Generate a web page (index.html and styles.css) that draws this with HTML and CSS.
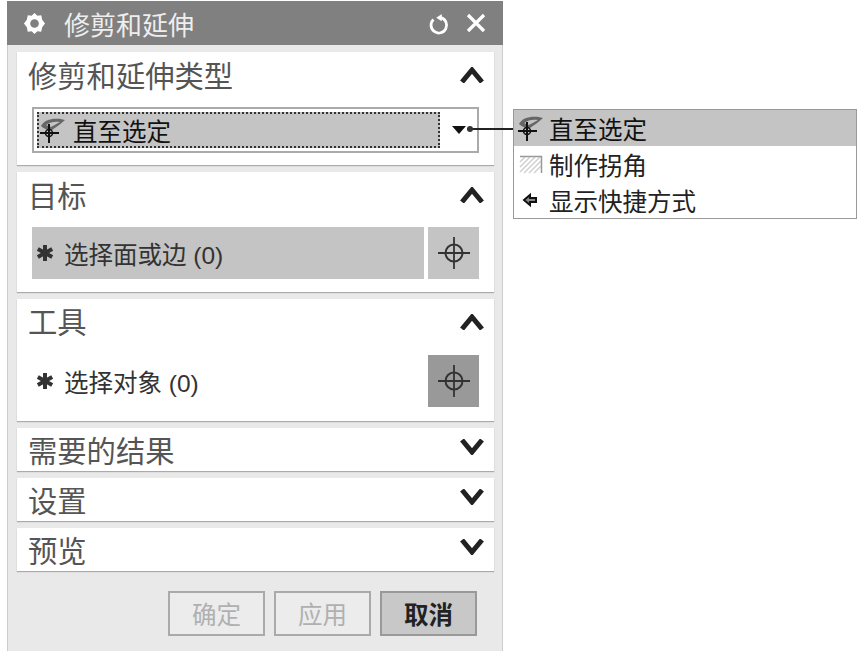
FILE: index.html
```html
<!DOCTYPE html>
<html lang="zh-CN">
<head>
    <meta charset="UTF-8">
    <title>修剪和延伸</title>
    <link rel="stylesheet" href="styles.css">
</head>
<body>
    <svg class="defs" width="0" height="0">
        <symbol id="crosshair" viewBox="0 0 32 32">
            <circle cx="16" cy="16" r="8.5" fill="none" stroke="#333" stroke-width="2"/>
            <path d="M0 16H32M16 0V32" stroke="#333" stroke-width="1.8"/>
        </symbol>
        <symbol id="up" viewBox="0 0 24 16">
            <path d="M2 15L12 3L22 15" fill="none" stroke="#222" stroke-width="5"/>
        </symbol>
        <symbol id="down" viewBox="0 0 24 16">
            <path d="M2 1L12 13L22 1" fill="none" stroke="#222" stroke-width="5"/>
        </symbol>
        <symbol id="until" viewBox="0 0 25 25">
            <path d="M1 8C4 1 16 -1 25 2C21 6 16 9 12 12C8 12 4 11 1 8Z" fill="#666"/>
            <path d="M6 7C10 4 15 3 20 4C16 6 13 8 11 9Z" fill="#c4c4c4"/>
            <circle cx="9" cy="15" r="3.500" fill="none" stroke="#111" stroke-width="1.500"/>
            <path d="M0 15H19M9 6V25" stroke="#111" stroke-width="2"/>
        </symbol>
        <symbol id="star" viewBox="0 0 20 20">
            <path d="M10 1V19M2 5.500L18 14.500M18 5.500L2 14.500" stroke="#333" stroke-width="4.400"/>
        </symbol>
    </svg>

    <div class="dialog">
        <div class="titlebar">
            <svg class="gear" viewBox="0 0 24 24">
                <path d="M12 1L15 4L19 3.5L20 8L23 12L20 16L19 20.500L15 20L12 23L9 20L5 20.500L4 16L1 12L4 8L5 3.500L9 4Z" fill="#fff"/>
                <circle cx="12" cy="12" r="4.500" fill="#808080"/>
            </svg>
            <span class="title">修剪和延伸</span>
            <svg class="reset" viewBox="0 0 24 24">
                <path d="M6 6A8.500 8.500 0 1 0 14 4" fill="none" stroke="#fff" stroke-width="3"/>
                <path d="M9 4L15 0V8Z" fill="#fff"/>
            </svg>
            <svg class="close" viewBox="0 0 20 20">
                <path d="M2 2L18 18M18 2L2 18" stroke="#fff" stroke-width="3.200"/>
            </svg>
        </div>

        <div class="sections">
            <section class="group type-group">
                <div class="group-head">
                    <h3>修剪和延伸类型</h3>
                    <svg class="chevron"><use href="#up"/></svg>
                </div>
                <div class="combo">
                    <div class="combo-value">
                        <svg class="until-icon"><use href="#until"/></svg>
                        <span>直至选定</span>
                    </div>
                    <span class="combo-arrow"></span>
                </div>
            </section>

            <section class="group target-group">
                <div class="group-head">
                    <h3>目标</h3>
                    <svg class="chevron"><use href="#up"/></svg>
                </div>
                <div class="pick-row">
                    <div class="pick-label active">
                        <svg class="star"><use href="#star"/></svg>
                        <span>选择面或边 (0)</span>
                    </div>
                    <div class="pick-btn"><svg><use href="#crosshair"/></svg></div>
                </div>
            </section>

            <section class="group tool-group">
                <div class="group-head">
                    <h3>工具</h3>
                    <svg class="chevron"><use href="#up"/></svg>
                </div>
                <div class="pick-row">
                    <div class="pick-label">
                        <svg class="star"><use href="#star"/></svg>
                        <span>选择对象 (0)</span>
                    </div>
                    <div class="pick-btn dark"><svg><use href="#crosshair"/></svg></div>
                </div>
            </section>

            <section class="group closed">
                <div class="group-head">
                    <h3>需要的结果</h3>
                    <svg class="chevron"><use href="#down"/></svg>
                </div>
            </section>
            <section class="group closed">
                <div class="group-head">
                    <h3>设置</h3>
                    <svg class="chevron"><use href="#down"/></svg>
                </div>
            </section>
            <section class="group closed">
                <div class="group-head">
                    <h3>预览</h3>
                    <svg class="chevron"><use href="#down"/></svg>
                </div>
            </section>
        </div>

        <div class="buttons">
            <button class="disabled">确定</button>
            <button class="disabled">应用</button>
            <button class="cancel">取消</button>
        </div>
    </div>

    <!-- callout from the combo arrow to the opened list -->
    <div class="leader"></div>

    <div class="menu">
        <div class="menu-item selected">
            <svg class="until-icon"><use href="#until"/></svg>
            <span>直至选定</span>
        </div>
        <div class="menu-item">
            <svg class="menu-icon" viewBox="0 0 25 20">
                <path d="M2 18L17 3M6 19L22 3M11 19L23 7M2 13L12 3M2 8L7 3M16 19L23 12" stroke="#d0d0d0" stroke-width="1.500"/>
                <path d="M2 2.500H23.500V19" fill="none" stroke="#999" stroke-width="1.500"/>
            </svg>
            <span>制作拐角</span>
        </div>
        <div class="menu-item">
            <svg class="menu-icon" viewBox="0 0 25 20">
                <path d="M6 10L12 5V8H18V12H12V15Z" fill="#888" stroke="#111" stroke-width="2"/>
            </svg>
            <span>显示快捷方式</span>
        </div>
    </div>
</body>
</html>
```

FILE: styles.css
```css
html, body {
    margin: 0;
    height: 100%;
    background-color: #fff;
    overflow: hidden;
    font-family: "Liberation Sans", "Noto Sans CJK SC", sans-serif;
    color: #333;
}

body {
    position: relative;
}

.defs {
    position: absolute;
}

.dialog {
    box-sizing: border-box;
    width: 496px;
    height: 650px;
    margin: 1px 0 0 7px;
    background-color: #e9e9e9;
    border-left: 1px solid #ccc;
    border-right: 1px solid #ccc;
    display: flex;
    flex-direction: column;
}

/* Title bar */
.titlebar {
    height: 44px;
    margin: 0 -1px;
    background-color: #808080;
    display: flex;
    align-items: center;
    padding: 0 17px 0 16px;
    color: #eee;
}

.gear {
    width: 23px;
    height: 23px;
}

.title {
    margin-left: 18px;
    font-size: 26px;
    flex: 1;
}

.reset {
    width: 22px;
    height: 22px;
    margin-top: 3px;
}

.close {
    width: 20px;
    height: 20px;
    margin-left: 16px;
}

/* Collapsible groups */
.sections {
    margin: 7px 8px 0 9px;
    display: flex;
    flex-direction: column;
    gap: 7px;
}

.group {
    background-color: #fff;
    box-shadow: 0 1px 1px #aaa;
    padding: 0 10px 0 11px;
}

.type-group {
    height: 113px;
}

.target-group {
    height: 120px;
}

.tool-group {
    height: 122px;
}

.closed {
    height: 43px;
}

.group-head {
    display: flex;
    justify-content: space-between;
    align-items: center;
    height: 43px;
}

.group-head h3 {
    margin: 0;
    height: 43px;
    font-size: 29.300px;
    font-weight: 400;
    line-height: 50px;
    color: #555;
}

.tool-group .group-head h3,
.closed .group-head h3 {
    line-height: 47px;
}

.chevron {
    width: 24px;
    height: 16px;
    margin-top: 2px;
}

.closed .chevron {
    margin-top: 0;
    margin-bottom: 6px;
}

/* Type dropdown */
.combo {
    box-sizing: border-box;
    height: 46px;
    margin: 12px 5px 0 4px;
    border: 2px solid #aaa;
    display: flex;
    align-items: center;
    padding-left: 3px;
}

.combo-value {
    box-sizing: border-box;
    width: 403px;
    height: 36px;
    background-color: #c4c4c4;
    border: 2px dotted #333;
    display: flex;
    align-items: center;
    gap: 8px;
    padding-left: 1px;
    font-size: 24.500px;
    color: #111;
}

.until-icon {
    width: 25px;
    height: 25px;
    flex: none;
}

.combo-arrow {
    margin-left: 12px;
    border-left: 7px solid transparent;
    border-right: 7px solid transparent;
    border-top: 8px solid #111;
}

/* Selection rows */
.pick-row {
    height: 52px;
    margin: 12px 5px 0 4px;
    display: flex;
    gap: 4px;
}

.tool-group .pick-row {
    margin-top: 13px;
}

.pick-label {
    flex: 1;
    display: flex;
    align-items: center;
    gap: 10px;
    padding-left: 4px;
    font-size: 24.500px;
    color: #333;
}

.pick-label.active {
    background-color: #c4c4c4;
}

.star {
    width: 18px;
    height: 18px;
    flex: none;
}

.pick-btn {
    width: 51px;
    display: flex;
    align-items: center;
    justify-content: center;
    background-color: #c4c4c4;
}

.pick-btn.dark {
    background-color: #999;
}

.pick-btn svg {
    width: 32px;
    height: 32px;
}

/* Bottom buttons */
.buttons {
    display: flex;
    justify-content: flex-end;
    gap: 9px;
    margin: 20px 25px 0 0;
}

.buttons button {
    box-sizing: border-box;
    width: 97px;
    height: 45px;
    font-family: inherit;
    font-size: 24.500px;
    background-color: #ececec;
    border: 2px solid #aaa;
    border-radius: 0;
    padding: 0;
}

.buttons .disabled {
    color: #b0b0b0;
}

.buttons .cancel {
    background-color: #c8c8c8;
    border-color: #999;
    color: #222;
    font-weight: 700;
}

/* Opened list with its callout */
.leader {
    position: absolute;
    left: 467px;
    top: 128px;
    width: 46px;
    height: 2px;
    background-color: #222;
}

.leader::before {
    content: "";
    position: absolute;
    left: 0;
    top: -2px;
    width: 6px;
    height: 6px;
    border-radius: 50%;
    background-color: #333;
}

.menu {
    position: absolute;
    left: 513px;
    top: 109px;
    box-sizing: border-box;
    width: 344px;
    height: 110px;
    background-color: #fff;
    border: 1px solid #999;
}

.menu-item {
    height: 36px;
    display: flex;
    align-items: center;
    gap: 6px;
    padding-left: 4px;
    font-size: 24.500px;
    color: #222;
}

.menu-item.selected {
    background-color: #c4c4c4;
    color: #111;
}

.menu-icon {
    width: 25px;
    height: 20px;
    flex: none;
}
```
